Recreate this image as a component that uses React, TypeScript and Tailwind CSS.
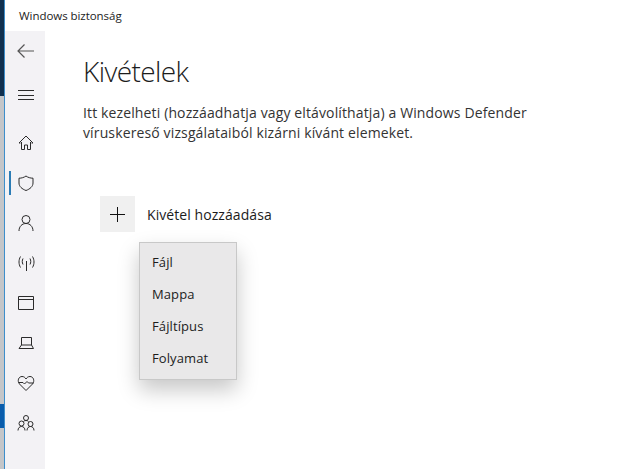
import type { ReactNode } from "react";

const NavIcon = ({ children, active }: { children: ReactNode; active?: boolean }) => (
  <div className="relative flex h-10 w-10 items-center justify-center">
    {active && <div className="absolute left-[4px] top-[8px] h-[24px] w-[2px] bg-[#2b7cb5]" />}
    <svg width="20" height="20" viewBox="0 0 20 20" fill="none" stroke="#2b2b2b" strokeWidth="1" className="ml-[2px]">
      {children}
    </svg>
  </div>
);

const App = () => {
  return (
    <div className="flex h-[469px] w-[639px] overflow-hidden bg-white font-['Open_Sans','Noto_Sans',sans-serif] text-[#1c1c1c]">
      {/* desktop peeking out on the left */}
      <div className="flex w-[4px] flex-col">
        <div className="h-[96px] bg-[#10304f]" />
        <div className="h-[308px] bg-[#c4c6c9]" />
        <div className="h-[24px] bg-[#0a5cab]" />
        <div className="flex-1 bg-[#c4c6c9]" />
      </div>
      <div className="w-px bg-[#3d8ecb]" />

      <div className="flex flex-1 flex-col">
        <div className="flex h-[31px] items-center pl-[14px] text-[11.5px] tracking-[-0.05px]">Windows biztonság</div>
        <div className="flex flex-1">
          <nav className="flex w-[40px] flex-col bg-[#f3f2f5]">
            <div className="flex h-10 items-center justify-center">
              <svg width="20" height="20" viewBox="0 0 20 20" fill="none" stroke="#555" strokeWidth="1.2" className="ml-[1px]">
                <path d="M18 10H2M8.500 3.500 2 10l6.500 6.500" />
              </svg>
            </div>
            <div className="flex h-[48px] items-center justify-center">
              <svg width="18" height="18" viewBox="0 0 18 18" fill="none" stroke="#2b2b2b" strokeWidth="1" className="ml-[1px]">
                <path d="M1 4.500h16M1 9.500h16M1 13.500h16" />
              </svg>
            </div>
            <div className="h-[4px]" />
            <NavIcon>
              <path d="M10 3 3 10h1.500M10 3l7 7h-1.500M5.500 9v7.500h3V12h3v4.500h3V9" />
            </NavIcon>
            <NavIcon active>
              <path d="M10 3c2 1.500 4.500 2.200 7 2.200V10c0 3.500-3 6-7 7.500-4-1.500-7-4-7-7.500V5.200C5.500 5.200 8 4.500 10 3Z" />
            </NavIcon>
            <NavIcon>
              <circle cx="10" cy="6.500" r="4" />
              <path d="M3 18c0-4.500 3-7.500 7-7.500s7 3 7 7.500" />
            </NavIcon>
            <NavIcon>
              <path d="M10.500 8v10M7 5.500C6 7.500 6 9.500 7 11.500M14 5.500c1 2 1 4 0 6M4.500 3.500c-2 3.500-2 7.500 0 11M16.500 3.500c2 3.500 2 7.500 0 11" />
            </NavIcon>
            <NavIcon>
              <path d="M2.500 3.500h15v13h-15zM2.500 6.500h15" />
            </NavIcon>
            <NavIcon>
              <path d="M5.500 4.500h10V12h-10zM5.500 12l-2.500 3.500h14.500L15.500 12" />
            </NavIcon>
            <NavIcon>
              <path d="M10 17.500 3.500 11C1 8 2.500 3.500 6 3.500c2 0 3 1 4 2.500 1-1.500 2-2.500 4-2.500 3.500 0 5 4.500 2.500 7.500ZM2.500 9.500H7l1.500 1.500 2.500-2.500 1.500 1.500h5" />
            </NavIcon>
            <NavIcon>
              <circle cx="10" cy="5" r="2.500" />
              <circle cx="5.500" cy="10.500" r="2.500" />
              <circle cx="14.500" cy="11" r="2.500" />
              <path d="M2 17.500c0-2.500 1.500-4 3.500-4s3.500 1.500 3.500 4M11 17.500c0-2.500 1.500-4 3.500-4s3.500 1.500 3.500 4M7.500 8.500c.5-.7 1.500-1 2.500-1s2 .3 2.500 1" />
            </NavIcon>
          </nav>

          <main className="flex-1 pl-[38px] pr-[60px]">
            <h1 className="mt-[20px] text-[28px] font-light leading-[40px] tracking-[-0.6px]">Kivételek</h1>
            <p className="mt-[12px] w-[480px] text-[14px] leading-[20px] tracking-[0.13px] text-[#333]">
              Itt kezelheti (hozzáadhatja vagy eltávolíthatja) a Windows Defender víruskereső vizsgálataiból kizárni kívánt elemeket.
            </p>
            <div className="relative mt-[53px] ml-[17px]">
              <div className="flex items-center gap-[12px]">
                <div className="flex h-[36px] w-[35px] items-center justify-center bg-[#f0f0f0]">
                  <svg width="15" height="15" viewBox="0 0 15 15" fill="none" stroke="#111" strokeWidth="1">
                    <path d="M7.500 0v15M0 7.500h15" />
                  </svg>
                </div>
                <span className="text-[14px] tracking-[0.07px]">Kivétel hozzáadása</span>
              </div>
              {/* flyout menu */}
              <div className="absolute left-[39px] top-[46px] w-[98px] border border-[#c8c8c8] bg-[#e9e8e9] py-[4px] pl-[12px] text-[13px] tracking-[0.1px] shadow-[0_10px_20px_rgba(0,0,0,0.22)]">
                <div className="flex h-[32px] items-center">Fájl</div>
                <div className="flex h-[32px] items-center">Mappa</div>
                <div className="flex h-[32px] items-center">Fájltípus</div>
                <div className="flex h-[32px] items-center">Folyamat</div>
              </div>
            </div>
          </main>
        </div>
      </div>
    </div>
  );
};

export default App;
